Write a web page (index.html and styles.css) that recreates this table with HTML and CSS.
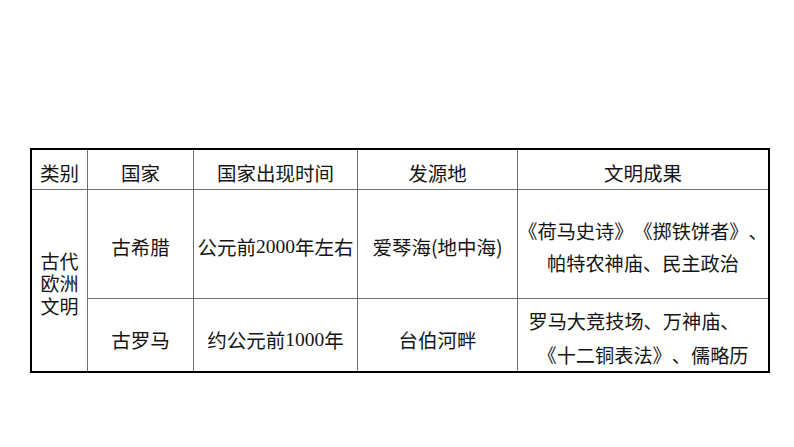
FILE: index.html
```html
<!DOCTYPE html>
<html lang="zh-CN">
<head>
<meta charset="utf-8">
<title>古代欧洲文明</title>
<link rel="stylesheet" href="styles.css">
</head>
<body>
<div class="sheet">
  <div class="cell head">类别</div>
  <div class="cell head">国家</div>
  <div class="cell head">国家出现时间</div>
  <div class="cell head">发源地</div>
  <div class="cell head">文明成果</div>

  <div class="cell cat">古代<br>欧洲<br>文明</div>
  <div class="cell">古希腊</div>
  <div class="cell">公元前<span class="num">2000</span>年左右</div>
  <div class="cell">爱琴海(地中海)</div>
  <div class="cell multi m1">
    <span class="line">《荷马史诗》《掷铁饼者》、</span>
    <span class="line">帕特农神庙、民主政治</span>
  </div>

  <div class="cell r2">古罗马</div>
  <div class="cell r2">约公元前<span class="num">1000</span>年</div>
  <div class="cell r2">台伯河畔</div>
  <div class="cell multi m2">
    <span class="line first">罗马大竞技场、万神庙、</span>
    <span class="line">《十二铜表法》、儒略历</span>
  </div>
</div>
</body>
</html>
```

FILE: styles.css
```css
html, body {
  margin: 0;
  padding: 0;
  background: #ffffff;
}

body {
  font-family: "Noto Sans CJK SC", "Noto Sans", sans-serif;
  color: #141414;
  text-spacing-trim: space-all;
}

.sheet {
  margin: 148px 0 0 30px;
  width: 736px;
  display: grid;
  grid-template-columns: 55px 105px 163px 159px 250px;
  grid-template-rows: 39px 108px 72px;
  gap: 1px;
  background: #6e6e6e;
  border: 2px solid #000000;
}

.cell {
  background: #ffffff;
  display: flex;
  align-items: center;
  justify-content: center;
  text-align: center;
  font-size: 19.5px;
  line-height: 24px;
  padding-top: 5px;
  white-space: nowrap;
}

.head {
  padding-top: 6px;
}

.num {
  font-family: "Liberation Serif", serif;
  font-size: 19.5px;
}

.cat {
  grid-row: 2 / 4;
  font-size: 19px;
  line-height: 22.5px;
  padding-top: 6px;
}

.multi {
  flex-direction: column;
  font-size: 19.2px;
}

.m1 {
  line-height: 32px;
  padding-top: 5px;
}

.r2 {
  padding-top: 10px;
}

.m2 {
  line-height: 34px;
  padding-top: 5px;
}

.line {
  display: block;
}

.first {
  margin-right: 18px;
}
```
